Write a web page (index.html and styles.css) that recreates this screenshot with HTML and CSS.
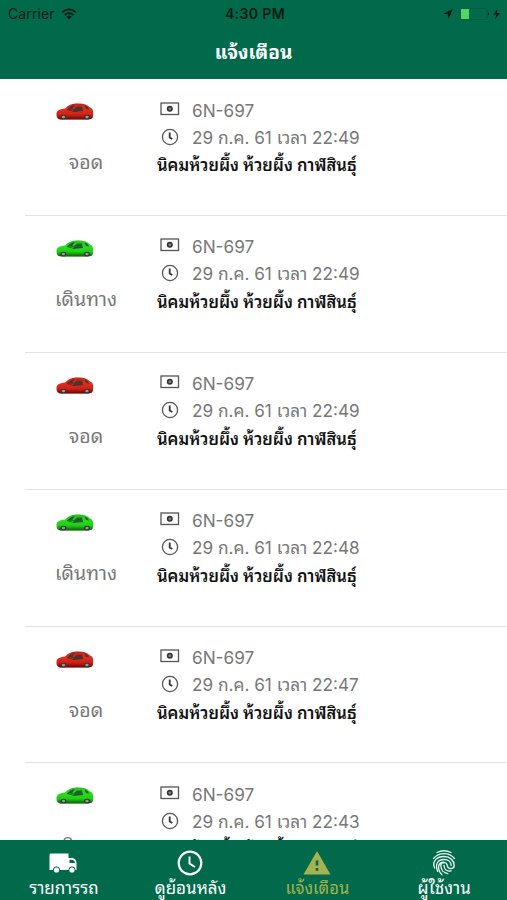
FILE: index.html
```html
<!DOCTYPE html>
<html lang="th">
<head>
<meta charset="utf-8">
<title>แจ้งเตือน</title>
<link rel="stylesheet" href="styles.css">
</head>
<body>
<svg class="defs" width="0" height="0" aria-hidden="true">
  <defs>
    <linearGradient id="shade" x1="0" y1="0" x2="0" y2="1"><stop offset="0" stop-color="#000" stop-opacity=".12"/><stop offset=".4" stop-color="#fff" stop-opacity=".05"/><stop offset=".7" stop-color="#000" stop-opacity=".05"/><stop offset="1" stop-color="#000" stop-opacity=".6"/></linearGradient>
  </defs>
  <symbol id="car" viewBox="0 0 38 19">
    <path d="M.5 12C.5 9 3 7 9 6.500C12 3.500 15 2 20 1.500C27 1 31 2.500 34 5.500C37 6.500 37.500 9 37 13.500C37 16.500 35 17.500 31 17.500L6 17.500C2 17.500 .5 16 .5 12Z" fill="currentColor"/>
    <path d="M.5 12C.5 9 3 7 9 6.500C12 3.500 15 2 20 1.500C27 1 31 2.500 34 5.500C37 6.500 37.500 9 37 13.500C37 16.500 35 17.500 31 17.500L6 17.500C2 17.500 .5 16 .5 12Z" fill="url(#shade)"/>
    <path d="M11 7.500C14 4.500 16 3.500 19 3L16.500 6.500L19 8ZM18.500 6.500L21 4.500L26 4.500L27 8.500L17 9.500ZM28.500 3.500C31 4 32 5.500 33 7.500L30 7Z" fill="#173b36" opacity=".75"/>
    <path d="M11 7.500L18 9.500L27 8.500" fill="none" stroke="#222" stroke-width=".8" opacity=".7"/>
    <ellipse cx="7.500" cy="15" rx="3" ry="2.300" fill="#343434"/><ellipse cx="7.500" cy="15" rx="1.700" ry="1.300" fill="#999"/>
    <ellipse cx="31" cy="15" rx="3" ry="2.300" fill="#343434"/><ellipse cx="31" cy="15" rx="1.700" ry="1.300" fill="#999"/>
  </symbol>
  <symbol id="plate" viewBox="0 0 20 14">
    <rect x="1" y="1" width="17.500" height="11.500" fill="none" stroke="#555" stroke-width="1.300"/>
    <circle cx="9.800" cy="6.800" r="2.200" fill="#888" stroke="#333" stroke-width="1.600"/>
  </symbol>
  <symbol id="clock" viewBox="0 0 18 18">
    <circle cx="9" cy="9" r="7.600" fill="none" stroke="#555" stroke-width="1.300"/>
    <path d="M8.700 4.500V9.500L11.300 11" fill="none" stroke="#333" stroke-width="1.800"/>
  </symbol>
</svg>
<div class="app">
  <header class="header">
    <div class="status">
      <div class="carrier"><span>Carrier</span>
        <svg width="16" height="12" viewBox="0 0 16 12"><path d="M1 4.300Q8-1.700 15 4.300M3.500 7Q8 3.200 12.500 7" fill="none" stroke="#061a13" stroke-width="1.700"/><path d="M5.300 8.600Q8 6.400 10.700 8.600L8 11.600Z" fill="#061a13"/></svg>
      </div>
      <div class="time">4:30 PM</div>
      <div class="power">
        <svg width="60" height="14" viewBox="0 0 60 14"><path d="M1 6.700L11 2L6.500 12L5.800 7.200Z" fill="#061a13"/><rect x="18.500" y="1.500" width="26.500" height="11" rx="1.500" fill="none" stroke="#07563e"/><rect x="19" y="2" width="8" height="10" fill="#4cd964"/><path d="M46 5.300Q48.500 7 46 8.700Z" fill="#061a13"/><path d="M55.500 1.500L51.500 7.500H54.300L53 12.500L58 6H55Z" fill="#061a13"/></svg>
      </div>
    </div>
    <h1 class="title"><span>แจ้งเตือน</span></h1>
  </header>
  <main class="list">
    <article class="row"><div class="state"><svg class="car red"><use href="#car"/></svg><span class="label">จอด</span></div><div class="info"><div class="line plate"><svg class="plate-icon"><use href="#plate"/></svg><span>6N-697</span></div><div class="line date"><svg class="clock-icon"><use href="#clock"/></svg><span>29 ก.ค. 61 เวลา 22:49</span></div><div class="place">นิคมห้วยผึ้ง ห้วยผึ้ง กาฬสินธุ์</div></div></article>
    <article class="row"><div class="state"><svg class="car green"><use href="#car"/></svg><span class="label">เดินทาง</span></div><div class="info"><div class="line plate"><svg class="plate-icon"><use href="#plate"/></svg><span>6N-697</span></div><div class="line date"><svg class="clock-icon"><use href="#clock"/></svg><span>29 ก.ค. 61 เวลา 22:49</span></div><div class="place">นิคมห้วยผึ้ง ห้วยผึ้ง กาฬสินธุ์</div></div></article>
    <article class="row"><div class="state"><svg class="car red"><use href="#car"/></svg><span class="label">จอด</span></div><div class="info"><div class="line plate"><svg class="plate-icon"><use href="#plate"/></svg><span>6N-697</span></div><div class="line date"><svg class="clock-icon"><use href="#clock"/></svg><span>29 ก.ค. 61 เวลา 22:49</span></div><div class="place">นิคมห้วยผึ้ง ห้วยผึ้ง กาฬสินธุ์</div></div></article>
    <article class="row"><div class="state"><svg class="car green"><use href="#car"/></svg><span class="label">เดินทาง</span></div><div class="info"><div class="line plate"><svg class="plate-icon"><use href="#plate"/></svg><span>6N-697</span></div><div class="line date"><svg class="clock-icon"><use href="#clock"/></svg><span>29 ก.ค. 61 เวลา 22:48</span></div><div class="place">นิคมห้วยผึ้ง ห้วยผึ้ง กาฬสินธุ์</div></div></article>
    <article class="row"><div class="state"><svg class="car red"><use href="#car"/></svg><span class="label">จอด</span></div><div class="info"><div class="line plate"><svg class="plate-icon"><use href="#plate"/></svg><span>6N-697</span></div><div class="line date"><svg class="clock-icon"><use href="#clock"/></svg><span>29 ก.ค. 61 เวลา 22:47</span></div><div class="place">นิคมห้วยผึ้ง ห้วยผึ้ง กาฬสินธุ์</div></div></article>
    <article class="row"><div class="state"><svg class="car green"><use href="#car"/></svg><span class="label">เดินทาง</span></div><div class="info"><div class="line plate"><svg class="plate-icon"><use href="#plate"/></svg><span>6N-697</span></div><div class="line date"><svg class="clock-icon"><use href="#clock"/></svg><span>29 ก.ค. 61 เวลา 22:43</span></div><div class="place">นิคมห้วยผึ้ง ห้วยผึ้ง กาฬสินธุ์</div></div></article>
  </main>
  <nav class="tabs">
    <div class="tab"><svg width="28" height="26" viewBox="0 0 28 26"><path d="M1.500 3.500H19.500V8H23.500Q27.500 9 27.500 13V20H26.500A3.500 3.500 0 0 0 19.500 20H11A3.500 3.500 0 0 0 4 20H.5V5Q.5 3.500 1.500 3.500ZM20.500 9.700V13H26Q25.500 10 22.700 9.700Z" fill="#fff" fill-rule="evenodd"/><circle cx="7.500" cy="20" r="2.600" fill="#fff"/><circle cx="23" cy="20" r="2.600" fill="#fff"/></svg><span>รายการรถ</span></div>
    <div class="tab"><svg width="26" height="26" viewBox="0 0 26 26"><circle cx="13" cy="13" r="11.300" fill="none" stroke="#fff" stroke-width="2.200"/><path d="M12.500 6.500V13.500L18 17" fill="none" stroke="#fff" stroke-width="2"/></svg><span>ดูย้อนหลัง</span></div>
    <div class="tab active"><svg width="28" height="26" viewBox="0 0 28 26"><path d="M14 1L27.500 24.500H.5ZM12.700 10.500V15.500H15.300V10.500ZM12.700 18V20.700H15.300V18Z" fill="#a6b24f" fill-rule="evenodd"/></svg><span>แจ้งเตือน</span></div>
    <div class="tab"><svg width="24" height="26" viewBox="0 0 24 26"><g fill="none" stroke="#e5f0ec" stroke-width="1.350" stroke-linecap="round"><path d="M5 2.500Q12-.9 19 2.500"/><path d="M1.500 8.500Q5.500 3.600 12 3.600T22.500 8.500"/><path d="M2.600 18C-.2 11 5 6.500 12 6.500C18 6.500 22.200 10.500 22.200 15.500C22.200 19.500 16 20 15.300 15.500C14.600 11.500 8.800 12 8.800 15.500C8.800 20 12 23 15.800 23.700"/><path d="M5.700 21.500C3 15 5 9.500 12 9.500C16.500 9.500 19.200 12.200 19.200 15.500"/><path d="M10 24.700C5.500 20.500 4.700 12.300 12 12.300"/><path d="M12 15.500C12 19.500 15 21.700 19 20.800"/></g></svg><span>ผู้ใช้งาน</span></div>
  </nav>
</div>
</body>
</html>
```
FILE: styles.css
```css
* { box-sizing: border-box; }
body { margin: 0; font-family: Inter, "Noto Sans Thai Looped", "Noto Looped Thai", Loma, Garuda, Waree, Umpush, Sarabun, "Noto Serif Thai", FreeSerif, "Noto Sans Thai", sans-serif; background: #fff; }
svg { display: block; flex: none; }
.defs { position: absolute; }
.app { height: 900px; display: flex; flex-direction: column; overflow: hidden; }
.header { height: 79px; background: #006a4b; flex: none; }
.status { height: 27px; display: grid; grid-template-columns: 1fr 1fr 1fr; align-items: center; padding: 0 5px 0 8px; font-size: 14px; color: #061a13; }
.carrier { display: flex; gap: 6px; align-items: center; letter-spacing: .1px; }
.time { font-weight: 600; text-align: center; letter-spacing: .4px; }
.power { display: flex; justify-content: flex-end; }
.title { margin: 0; height: 52px; line-height: 52px; text-align: center; color: #fff; font-size: 19px; font-weight: 700; }
.list { flex: 1; min-height: 0; overflow: hidden; }
.row { height: 136.9px; margin-left: 25px; border-bottom: 1px solid #e2e2e2; display: flex; color: #777; }
.state { width: 122px; padding-top: 23px; display: flex; flex-direction: column; align-items: center; }
.car { width: 38px; height: 19px; margin-right: 23px; }
.red { color: #dc2115; }
.green { color: #20d914; }
.label { margin-top: 25px; font-size: 19.5px; line-height: 32px; white-space: nowrap; }
.info { padding: 18px 0 0 10px; }
.line { display: flex; align-items: center; height: 26px; font-size: 17.2px; white-space: nowrap; }
.plate-icon { width: 20px; height: 14px; margin: 0 12px 3px 3px; }
.clock-icon { width: 18px; height: 18px; margin: 1px 13px 0 4px; }
.date span { margin-top: -1px; }
.place { color: #111; font-size: 16.5px; font-weight: 600; line-height: 33px; white-space: nowrap; }
.tabs { height: 60px; background: #006a4b; display: grid; grid-template-columns: repeat(4, 1fr); flex: none; }
.tab { display: flex; flex-direction: column; align-items: center; padding-top: 10px; color: #fff; font-size: 17px; }
.tab svg { height: 26px; }
.tab span { line-height: 24px; margin-left: 1px; white-space: nowrap; }
.active { color: #a6b24f; }
.active span { font-size: 16.6px; }
```
